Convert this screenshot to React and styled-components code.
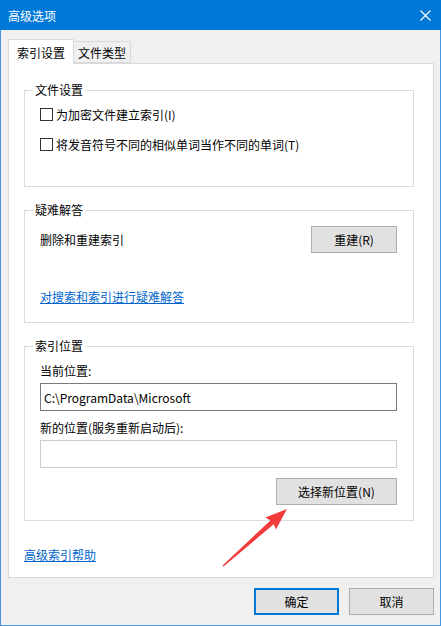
import React from 'react';
import styled, { createGlobalStyle } from 'styled-components';

const GlobalStyle = createGlobalStyle`
  html, body {
    margin: 0;
    padding: 0;
    background: #f0f0f0;
  }
  body {
    font-family: "Noto Sans CJK SC", "Microsoft YaHei", sans-serif;
    font-size: 12px;
    color: #000;
  }
`;

const Window = styled.div`
  position: relative;
  width: 441px;
  height: 626px;
  display: flex;
  flex-direction: column;
  overflow: hidden;
`;

const TitleBar = styled.div`
  height: 30px;
  flex-shrink: 0;
  background: #0078d7;
  color: #fff;
  display: flex;
  align-items: center;
  justify-content: space-between;
  padding: 0 0 0 8px;
  font-size: 12px;
`;

const CloseBtn = styled.div`
  width: 30px;
  height: 30px;
  display: flex;
  align-items: center;
  justify-content: center;
  margin-right: 1px;
`;

const Body = styled.div`
  flex: 1;
  display: flex;
  flex-direction: column;
  padding: 9px 7px 0 6px;
  border: 1px solid #4596e0;
  border-top: none;
`;

const TabRow = styled.div`
  display: flex;
  align-items: flex-end;
  height: 24px;
  margin-left: 1px;
`;

const Tab = styled.div`
  box-sizing: border-box;
  height: ${p => (p.$active ? '25px' : '22px')};
  margin-bottom: ${p => (p.$active ? '-1px' : '0')};
  padding: 0 ${p => (p.$active ? '8px' : '4px')};
  display: flex;
  align-items: center;
  background: ${p => (p.$active ? '#fff' : '#f0f0f0')};
  border: 1px solid #d9d9d9;
  border-bottom: ${p => (p.$active ? 'none' : '1px solid #d9d9d9')};
  border-left: ${p => (p.$active ? '1px solid #d9d9d9' : 'none')};
  position: relative;
  z-index: ${p => (p.$active ? 1 : 0)};
`;

const Panel = styled.div`
  box-sizing: border-box;
  height: 515px;
  width: 426px;
  margin-left: 1px;
  background: #fff;
  border: 1px solid #d9d9d9;
  padding: 26px 19px 0 15px;
  display: flex;
  flex-direction: column;
`;

const Group = styled.div`
  box-sizing: border-box;
  height: ${p => p.$h}px;
  border: 1px solid #dcdcdc;
  display: flex;
  flex-direction: column;
  margin-bottom: 23px;
  padding: 0 16px 0 15px;
`;

const Legend = styled.div`
  align-self: flex-start;
  margin: -8px 0 0 -7px;
  padding: 0 2px;
  line-height: 14px;
  background: #fff;
`;

const CheckRow = styled.label`
  display: flex;
  align-items: center;
  height: 16px;
  margin-top: ${p => p.$mt}px;
  gap: 3px;
`;

const Box = styled.span`
  box-sizing: border-box;
  width: 13px;
  height: 13px;
  border: 1px solid #333;
  background: #fff;
`;

const Line = styled.div`
  display: flex;
  align-items: center;
  justify-content: space-between;
  margin-top: ${p => p.$mt}px;
`;

const Text = styled.div`
  line-height: 14px;
  margin-top: ${p => p.$mt || 0}px;
`;

const Link = styled.a`
  color: #0066cc;
  text-decoration: underline;
  line-height: 14px;
  align-self: flex-start;
  margin-top: ${p => p.$mt || 0}px;
  cursor: pointer;
`;

const Button = styled.button`
  box-sizing: border-box;
  width: ${p => p.$w}px;
  height: 27px;
  background: #e1e1e1;
  border: ${p => (p.$primary ? '2px solid #0078d7' : '1px solid #adadad')};
  font-family: inherit;
  font-size: 12px;
  color: #000;
  padding: 0;
  align-self: ${p => p.$align || 'auto'};
  margin-top: ${p => p.$mt || 0}px;
`;

const Field = styled.div`
  box-sizing: border-box;
  height: 28px;
  width: 357px;
  border: 1px solid ${p => (p.$disabled ? '#cccccc' : '#7a7a7a')};
  background: #fff;
  display: flex;
  align-items: center;
  padding-left: 3px;
  margin-top: ${p => p.$mt}px;
`;

const Footer = styled.div`
  display: flex;
  justify-content: flex-end;
  gap: 10px;
  padding-top: 10px;
  margin-right: -1px;
`;

const Pointer = styled.svg`
  position: absolute;
  left: 0;
  top: 0;
  pointer-events: none;
`;

export default function App() {
  return (
    <>
      <GlobalStyle />
      <Window>
        <TitleBar>
          <span>高级选项</span>
          <CloseBtn>
            <svg width="11" height="11" viewBox="0 0 11 11">
              <path d="M0.5 0.5 L10.5 10.5 M10.5 0.5 L0.5 10.5" stroke="#fff" strokeWidth="1.1" />
            </svg>
          </CloseBtn>
        </TitleBar>
        <Body>
          <TabRow>
            <Tab $active>索引设置</Tab>
            <Tab>文件类型</Tab>
          </TabRow>
          <Panel>
            <Group $h={97}>
              <Legend>文件设置</Legend>
              <CheckRow $mt={9}>
                <Box />
                为加密文件建立索引(I)
              </CheckRow>
              <CheckRow $mt={14}>
                <Box />
                将发音符号不同的相似单词当作不同的单词(T)
              </CheckRow>
            </Group>

            <Group $h={113}>
              <Legend>疑难解答</Legend>
              <Line $mt={9}>
                <Text>删除和重建索引</Text>
                <Button $w={86}>重建(R)</Button>
              </Line>
              <Link $mt={37}>对搜索和索引进行疑难解答</Link>
            </Group>

            <Group $h={175}>
              <Legend>索引位置</Legend>
              <Text $mt={11}>当前位置:</Text>
              <Field $mt={5}>C:\ProgramData\Microsoft</Field>
              <Text $mt={10}>新的位置(服务重新启动后):</Text>
              <Field $mt={5} $disabled />
              <Button $w={121} $mt={10} $align="flex-end">选择新位置(N)</Button>
            </Group>

            <Link $mt={4}>高级索引帮助</Link>
          </Panel>
          <Footer>
            <Button $w={85} $primary>确定</Button>
            <Button $w={85}>取消</Button>
          </Footer>
        </Body>
        <Pointer width="441" height="626" viewBox="0 0 441 626">
          <polygon
            points="222.5,565.5 223.5,566.5 273.8,524.2 275.9,529.6 287,509 265.3,517.6 270.4,520.4"
            fill="#f23c3c"
          />
        </Pointer>
      </Window>
    </>
  );
}
